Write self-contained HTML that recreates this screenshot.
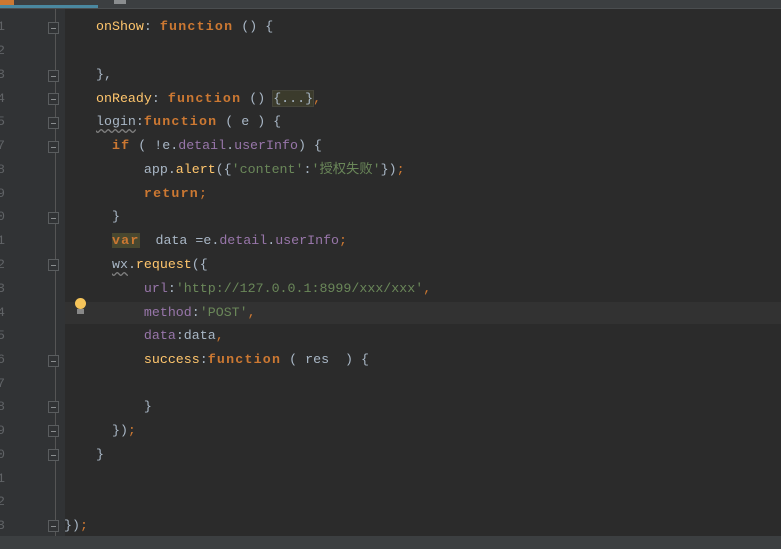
<!DOCTYPE html>
<html><head><meta charset="utf-8"><style>
body{margin:0;width:781px;height:549px;overflow:hidden;background:#2b2b2b;position:relative;font-family:"Liberation Mono","Noto Sans CJK SC",monospace;font-size:13.3px;}
.tab{position:absolute;left:0;top:0;width:781px;height:8px;background:#3c3f41;border-bottom:1px solid #4b4e50}
.gut{position:absolute;left:0;top:9px;width:65px;height:527px;background:#313335}
.l{position:absolute;left:96px;white-space:pre;color:#a9b7c6;line-height:18px;top:0}
.n{position:absolute;left:-3px;color:#606366;line-height:18px}
.k{color:#cc7832;font-weight:bold;letter-spacing:1.2px}.f{color:#ffc66d}.p{color:#9876aa}.s{color:#6a8759}.o{color:#cc7832}
.fold{position:absolute;left:48px;width:11px;height:12px;border:1px solid #5a5d5f;box-sizing:border-box;background:#313335}
.fold:after{content:"";position:absolute;left:2px;top:5px;width:5px;height:1px;background:#8a8d8f}
.u{text-decoration:underline wavy #808080;text-underline-offset:3px}
</style></head><body>
<div class="tab"></div>
<div style="position:absolute;left:0;top:0;width:14px;height:5px;background:#cc7832"></div>
<div style="position:absolute;left:0;top:5px;width:98px;height:3px;background:#4a88a0"></div>
<div style="position:absolute;left:114px;top:0;width:12px;height:4px;background:#8a8d8f"></div>
<div class="gut"></div>
<div style="position:absolute;left:55px;top:9px;width:1px;height:527px;background:#555"></div>
<div style="position:absolute;left:65px;top:302px;width:716px;height:22px;background:#323232"></div>
<div style="position:absolute;left:75px;top:298px;width:11px;height:11px;border-radius:50%;background:#f5c45a"></div>
<div style="position:absolute;left:77px;top:309px;width:7px;height:5px;background:#888"></div>
<div style="position:absolute;left:0;top:536px;width:781px;height:13px;background:#3c3f41"></div>
<div class="n" style="top:18px">1</div><div class="n" style="top:42px">2</div><div class="n" style="top:66px">3</div><div class="n" style="top:90px">4</div><div class="n" style="top:113px">5</div><div class="n" style="top:137px">7</div><div class="n" style="top:161px">8</div><div class="n" style="top:185px">9</div><div class="n" style="top:208px">0</div><div class="n" style="top:232px">1</div><div class="n" style="top:256px">2</div><div class="n" style="top:280px">3</div><div class="n" style="top:304px">4</div><div class="n" style="top:327px">5</div><div class="n" style="top:351px">6</div><div class="n" style="top:375px">7</div><div class="n" style="top:398px">8</div><div class="n" style="top:422px">9</div><div class="n" style="top:446px">0</div><div class="n" style="top:470px">1</div><div class="n" style="top:493px">2</div><div class="n" style="top:517px">3</div>
<div class="fold" style="top:22px"></div><div class="fold" style="top:70px"></div><div class="fold" style="top:93px"></div><div class="fold" style="top:117px"></div><div class="fold" style="top:141px"></div><div class="fold" style="top:212px"></div><div class="fold" style="top:259px"></div><div class="fold" style="top:355px"></div><div class="fold" style="top:401px"></div><div class="fold" style="top:425px"></div><div class="fold" style="top:449px"></div><div class="fold" style="top:520px"></div>
<div class="l" style="top:18px"><span class="f">onShow</span>: <span class="k">function</span> () {</div>
<div class="l" style="top:66px">},</div>
<div class="l" style="top:90px"><span class="f">onReady</span>: <span class="k">function</span> () <span style="background:#3b3b2c;outline:1px solid #45453a">{...}</span><span class="o">,</span></div>
<div class="l" style="top:113px"><span class="u">login</span>:<span class="k">function</span> ( e ) {</div>
<div class="l" style="top:137px">  <span class="k">if</span> ( !e.<span class="p">detail</span>.<span class="p">userInfo</span>) {</div>
<div class="l" style="top:161px">      app.<span class="f">alert</span>({<span class="s">'content'</span>:<span class="s">'授权失败'</span>})<span class="o">;</span></div>
<div class="l" style="top:185px">      <span class="k">return</span><span class="o">;</span></div>
<div class="l" style="top:208px">  }</div>
<div class="l" style="top:232px">  <span class="k" style="background:#484830">var</span>  data =e.<span class="p">detail</span>.<span class="p">userInfo</span><span class="o">;</span></div>
<div class="l" style="top:256px">  <span class="u">wx</span>.<span class="f">request</span>({</div>
<div class="l" style="top:280px">      <span class="p">url</span>:<span class="s">'http://127.0.0.1:8999/xxx/xxx'</span><span class="o">,</span></div>
<div class="l" style="top:304px">      <span class="p">method</span>:<span class="s">'POST'</span><span class="o">,</span></div>
<div class="l" style="top:327px">      <span class="p">data</span>:data<span class="o">,</span></div>
<div class="l" style="top:351px">      <span class="f">success</span>:<span class="k">function</span> ( res  ) {</div>
<div class="l" style="top:398px">      }</div>
<div class="l" style="top:422px">  })<span class="o">;</span></div>
<div class="l" style="top:446px">}</div>
<div class="l" style="top:517px;left:64px">})<span class="o">;</span></div>
</body></html>
